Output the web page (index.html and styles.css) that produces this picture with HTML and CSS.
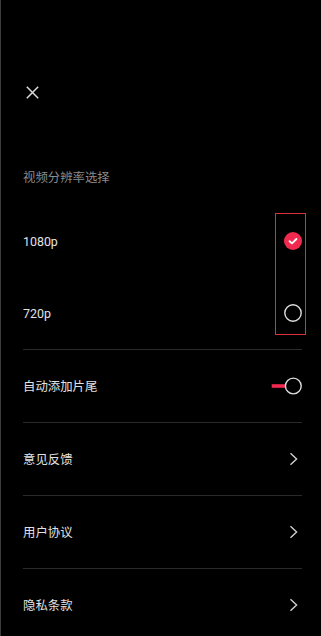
FILE: index.html
```html
<!DOCTYPE html>
<html lang="zh">
<head>
<meta charset="utf-8">
<title>设置</title>
<link rel="stylesheet" href="styles.css">
</head>
<body>
<div class="page">
  <div class="topbar">
    <svg class="close" width="13" height="13" viewBox="0 0 13 13"><path d="M0.8 0.8 L12.2 12.2 M12.2 0.8 L0.8 12.2" stroke="#dcdcdc" stroke-width="1.5" fill="none"/></svg>
  </div>
  <div class="section-title">视频分辨率选择</div>
  <div class="options">
    <div class="row">
      <span class="label">1080p</span>
      <svg class="icon" width="18" height="18" viewBox="0 0 18 18"><circle cx="9" cy="9" r="9" fill="#f2294f"/><path d="M5.6 9.2 L8 11.4 L12.4 7" stroke="#fff" stroke-width="1.9" fill="none" stroke-linecap="round" stroke-linejoin="round"/></svg>
    </div>
    <div class="row bordered">
      <span class="label">720p</span>
      <svg class="icon" width="18" height="18" viewBox="0 0 18 18"><circle cx="9" cy="9" r="8.2" fill="none" stroke="#dedede" stroke-width="1.4"/></svg>
    </div>
    <div class="highlight"></div>
  </div>
  <div class="row bordered">
    <span class="label">自动添加片尾</span>
    <svg class="toggle" width="31" height="18" viewBox="0 0 31 18"><path d="M0.7 9 L15 9" stroke="#f2294f" stroke-width="3.6"/><circle cx="22.3" cy="9" r="7.9" fill="#000" stroke="#dedede" stroke-width="1.4"/></svg>
  </div>
  <div class="row bordered">
    <span class="label">意见反馈</span>
    <svg class="icon" width="18" height="18" viewBox="0 0 18 18"><path d="M6.5 3.3 L12.6 9 L6.5 14.7" stroke="#d0d0d0" stroke-width="1.4" fill="none"/></svg>
  </div>
  <div class="row bordered">
    <span class="label">用户协议</span>
    <svg class="icon" width="18" height="18" viewBox="0 0 18 18"><path d="M6.5 3.3 L12.6 9 L6.5 14.7" stroke="#d0d0d0" stroke-width="1.4" fill="none"/></svg>
  </div>
  <div class="row">
    <span class="label">隐私条款</span>
    <svg class="icon" width="18" height="18" viewBox="0 0 18 18"><path d="M6.5 3.3 L12.6 9 L6.5 14.7" stroke="#d0d0d0" stroke-width="1.4" fill="none"/></svg>
  </div>
</div>
</body>
</html>
```

FILE: styles.css
```css
html, body {
  margin: 0;
  padding: 0;
  background: #000;
}
body {
  width: 321px;
  height: 636px;
  overflow: hidden;
  box-sizing: border-box;
  border-left: 1px solid #3c3c3c;
  font-family: Roboto, "Noto Sans CJK SC", sans-serif;
}
.page {
  display: flex;
  flex-direction: column;
  padding: 0 19px 0 22px;
}
.topbar {
  display: flex;
  align-items: center;
  padding-top: 86px;
  padding-left: 3px;
  height: 13px;
}
.close {
  display: block;
}
.section-title {
  margin-top: 70px;
  height: 18px;
  line-height: 18px;
  font-size: 12.4px;
  color: #8a8a8a;
}
.options {
  position: relative;
  margin-top: 18px;
  display: flex;
  flex-direction: column;
}
.row {
  display: flex;
  align-items: center;
  justify-content: space-between;
  height: 72px;
  flex-shrink: 0;
}
.row.bordered {
  border-bottom: 1px solid #2a2a2a;
}
.label {
  font-size: 12.4px;
  color: #e2e2e2;
}
.icon {
  display: block;
  margin-right: 0.5px;
}
.toggle {
  display: block;
}
.highlight {
  position: absolute;
  left: 252px;
  top: 8px;
  width: 29px;
  height: 120px;
  border: 1px solid #d8323e;
}
```
